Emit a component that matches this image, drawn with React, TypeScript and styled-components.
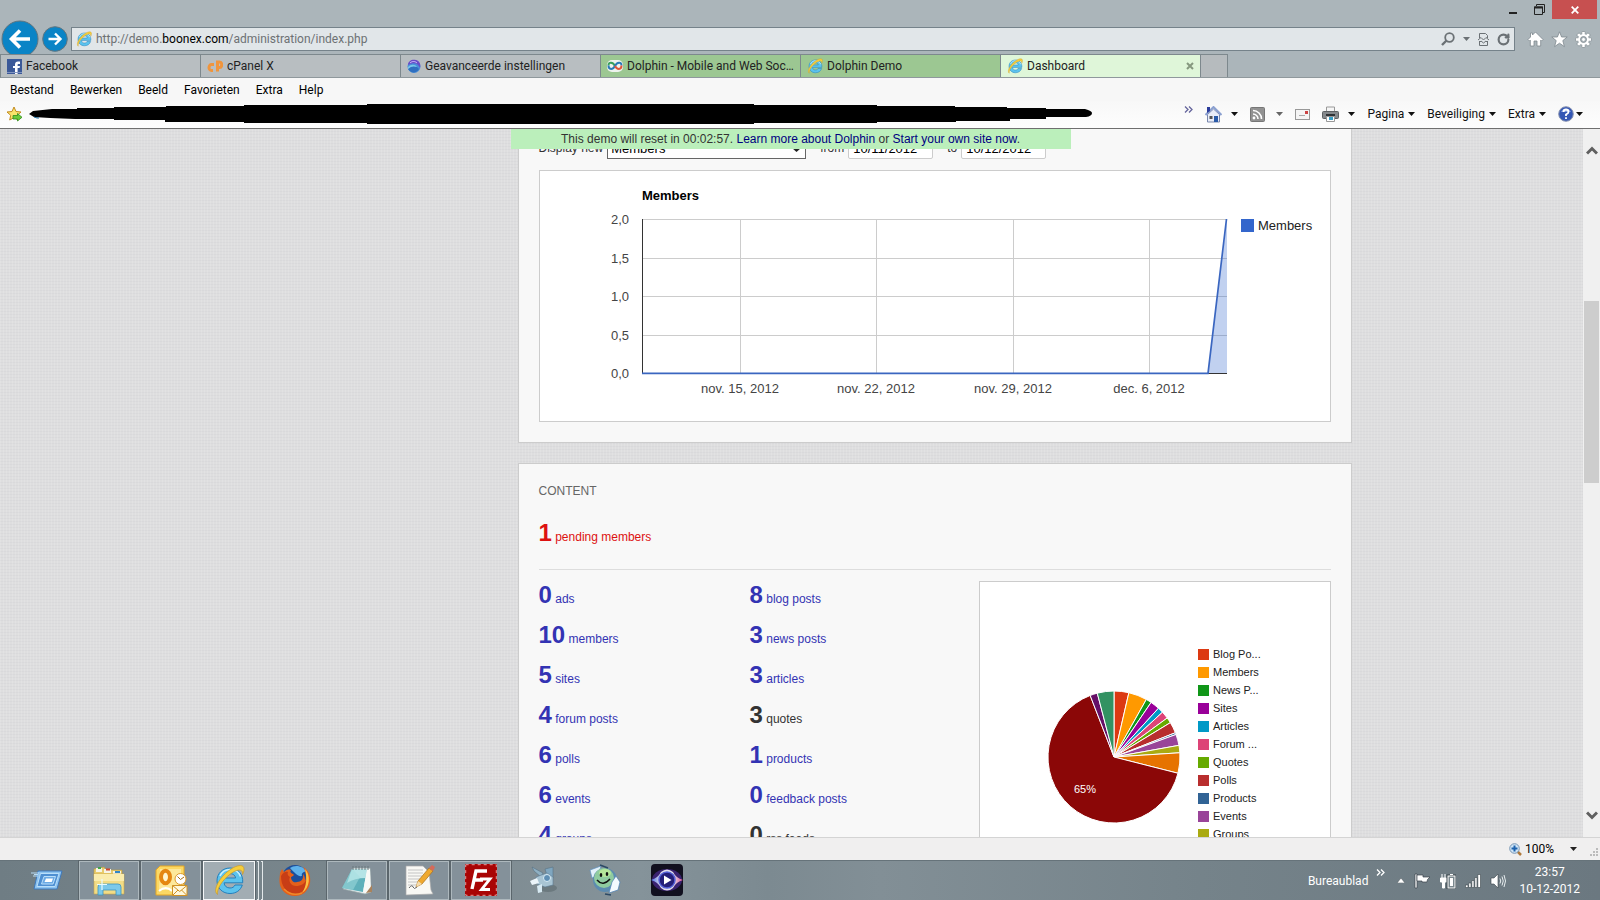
import React from 'react';
import styled, { createGlobalStyle } from 'styled-components';
import { RotateCw } from 'lucide-react';

const ui = 'Roboto, "Noto Sans", sans-serif';
const arial = '"Liberation Sans", Arial, sans-serif';

const GlobalStyle = createGlobalStyle`
  * { box-sizing: border-box; }
  body { margin: 0; background: #dcdcdd; }
  button { font: inherit; color: inherit; background: none; border: 0; padding: 0; white-space: nowrap; }
  svg { display: block; flex: none; }
`;

const Desktop = styled.div`
  display: flex;
  flex-direction: column;
  height: 100vh;
  overflow: hidden;
  font: 12px/16px ${ui};
  color: #000;
`;

/* ---------- browser frame ---------- */

const Frame = styled.header`
  flex: none;
  background: #abb5ba;
`;

const TitleBar = styled.div`
  display: flex;
  justify-content: flex-end;
  height: 26px;
  padding-right: 3px;
`;

const WindowButton = styled.button<{ $close?: boolean }>`
  display: flex;
  align-items: center;
  justify-content: center;
  width: ${p => (p.$close ? 45 : 26)}px;
  height: 19px;
  background: ${p => (p.$close ? '#c75050' : 'transparent')};
`;

const NavRow = styled.div`
  display: flex;
  align-items: center;
  height: 28px;
  padding: 0 8px 2px 1px;
`;

const BackButton = styled.button`
  flex: none;
  width: 38px;
  height: 38px;
`;

const ForwardButton = styled.button`
  flex: none;
  width: 26px;
  margin: 0 3px;
`;

const AddressBar = styled.div`
  display: flex;
  flex: 1;
  align-items: center;
  gap: 4px;
  height: 24px;
  padding: 0 4px;
  border: 1px solid #75828a;
  background: #e1e6e9;
`;

const Url = styled.div`
  flex: 1;
  color: #6d7174;
  b { font-weight: 400; color: #000; }
`;

const IconButton = styled.button`
  display: flex;
  align-items: center;
  justify-content: center;
`;

const AddressTools = styled.div`
  display: flex;
  align-items: center;
  gap: 8px;
  color: #6b7175;
`;

const BrowserTools = styled.div`
  display: flex;
  gap: 7px;
  padding-left: 12px;
`;

const TabStrip = styled.nav`
  display: flex;
  height: 24px;
  border-bottom: 1px solid #8f989c;
  border-left: 1px solid #7d888d;
`;

const Tab = styled.div<{ $tone: string }>`
  display: flex;
  align-items: center;
  width: 200px;
  padding: 0 6px;
  border: 1px solid #7d888d;
  border-width: 1px 1px 0 0;
  background: ${p => p.$tone};
  color: #222;
`;

const TabButton = styled.button`
  display: flex;
  flex: 1;
  align-items: center;
  gap: 4px;
  min-width: 0;
  text-align: left;
  span { overflow: hidden; text-overflow: ellipsis; white-space: nowrap; }
`;

const NewTab = styled.button`
  width: 27px;
  border: 1px solid #7d888d;
  border-width: 1px 1px 0 0;
  background: #b6bbbe;
`;

const MenuBar = styled.nav`
  display: flex;
  gap: 16px;
  height: 23px;
  padding: 0 10px;
  align-items: center;
  background: #f7f7f7;
`;

const CommandBar = styled.div`
  display: flex;
  align-items: center;
  height: 28px;
  padding: 0 17px 1px 6px;
  border-bottom: 1px solid #6f6f6f;
  background: linear-gradient(#f8f8f8, #fdfdfd);
`;

const ScribbleHolder = styled.div`
  flex: none;
  margin-left: 5px;
`;

const Commands = styled.div`
  display: flex;
  flex: 1;
  align-items: center;
  justify-content: flex-end;
  gap: 12px;
`;

const Command = styled.button<{ $gap?: number; $muted?: boolean }>`
  display: flex;
  align-items: center;
  gap: ${p => p.$gap ?? 3}px;
  color: ${p => (p.$muted ? '#666' : '#111')};
`;

const Overflow = styled.button`
  display: flex;
  align-self: flex-start;
  color: #65659c;
`;

/* ---------- web page ---------- */

const Viewport = styled.div`
  display: flex;
  flex: 1;
  min-height: 0;
`;

const Page = styled.main`
  position: relative;
  flex: 1;
  min-width: 0;
  overflow: hidden;
  font: 12px/16px ${arial};
  color: #333;
  background:
    repeating-linear-gradient(90deg, rgba(255,255,255,.12) 0 1px, transparent 1px 3px),
    repeating-linear-gradient(#dededf 0 2px, #d9d9db 2px 3px);
`;

const DemoBanner = styled.div`
  position: absolute;
  z-index: 1;
  top: 0;
  left: 50%;
  width: 560px;
  height: 20px;
  margin-left: -281px;
  line-height: 20px;
  background: #bbefbb;
  text-align: center;
  a { color: #000080; text-decoration: none; }
`;

const Container = styled.div`
  max-width: 1120px;
  margin: 0 auto;
  padding-left: 286px;
`;

const Panel = styled.section<{ $first?: boolean }>`
  margin-bottom: 20px;
  padding: ${p => (p.$first ? '8px' : '18px')} 20px 20px;
  border: 1px solid #ccc;
  border-top-width: ${p => (p.$first ? 0 : 1)}px;
  background: #f8f8f8;
`;

const FilterRow = styled.form`
  display: flex;
  align-items: center;
  margin-bottom: 11px;
`;

const Field = styled.label`
  display: flex;
  align-items: center;
  gap: 4px;
  margin-right: 14px;
`;

const SelectWrap = styled.span`
  position: relative;
  svg { position: absolute; right: 5px; top: 9px; pointer-events: none; }
`;

const Select = styled.select`
  appearance: none;
  display: block;
  width: 199px;
  height: 22px;
  padding: 1px 3px 0;
  border: 1px solid #666;
  border-radius: 0;
  background: #fff;
  font: 13px ${arial};
  color: #000;
`;

const DateInput = styled.input`
  width: 85px;
  height: 22px;
  padding: 1px 4px 0;
  border: 1px solid #ccc;
  border-radius: 2px;
  background: #fff;
  font: 13px ${arial};
  color: #000;
`;

const ChartBox = styled.div`
  border: 1px solid #ccc;
  background: #fff;
`;

const Heading = styled.h2`
  margin: 0 0 19px;
  font: 12px/18px ${arial};
  color: #666;
`;

const Pending = styled.div`
  height: 51px;
  border-bottom: 1px solid #ddd;
  margin-bottom: 11px;
`;

const ContentGrid = styled.div`
  display: grid;
  grid-template-columns: 211px 1fr 352px;
`;

const StatList = styled.ul`
  margin: 0;
  padding: 0;
  list-style: none;
`;

const Stat = styled.a<{ $tone?: string }>`
  display: block;
  height: 40px;
  line-height: 28px;
  color: ${p => p.$tone ?? '#3333b3'};
  text-decoration: none;
  b { font-size: 24px; }
`;

const ScrollTrack = styled.div`
  display: flex;
  flex: none;
  flex-direction: column;
  align-items: center;
  width: 17px;
  padding: 17px 0;
  background: #f0f0f0;
`;

const ScrollSpace = styled.div<{ $grow: number }>`
  flex: ${p => p.$grow} 1 0;
`;

const ScrollThumb = styled.div`
  flex: 182 1 0;
  width: 15px;
  background: #cdcdcd;
`;

const StatusBar = styled.footer`
  display: flex;
  flex: none;
  align-items: center;
  justify-content: flex-end;
  height: 23px;
  border-top: 1px solid #d4d4d4;
  background: #f0efef;
`;

const ZoomButton = styled.button`
  display: flex;
  align-items: center;
  gap: 3px;
  margin-right: 12px;
  svg:last-child { margin-left: 13px; }
`;

/* ---------- taskbar ---------- */

const Taskbar = styled.footer`
  display: flex;
  flex: none;
  align-items: center;
  height: 40px;
  padding: 0 20px 0 17px;
  border-top: 1px solid #66737a;
  background: linear-gradient(90deg, #6f7d84, #7b888e 25%, #85939a 40%, #7c8a91 48%, #828f96 55%, #75838a 75%, #6b7880);
  color: #fff;
`;

const TaskButton = styled.button<{ $open?: boolean; $active?: boolean }>`
  display: flex;
  align-items: center;
  justify-content: center;
  width: ${p => (p.$active ? 52 : 60)}px;
  height: 39px;
  margin-right: 2px;
  padding-bottom: 1px;
  border: 1px solid ${p => (p.$active ? '#f4f7f8' : p.$open ? '#adb8bd' : 'transparent')};
  outline: ${p => (p.$open || p.$active ? '1px solid #5b666c' : 'none')};
  background: ${p => (p.$active ? '#a2adb3' : p.$open ? '#84919a' : 'transparent')};
`;

const Stacked = styled.span`
  display: flex;
  gap: 2px;
  width: 8px;
  height: 39px;
  i { width: 2px; border: 1px solid #e2e8ea; border-left: 0; }
`;

const Tray = styled.div`
  display: flex;
  flex: 1;
  align-items: center;
  justify-content: flex-end;
`;

const DesktopLabel = styled.button`
  display: flex;
  margin-right: 12px;
  svg { margin: -4px 0 0 8px; }
`;

const TrayIcons = styled.div`
  display: flex;
  align-items: center;
  gap: 9px;
  margin-right: 13px;
`;

const Clock = styled.time`
  text-align: center;
  line-height: 17px;
`;

/* ---------- drawings ---------- */

const Caret = ({ color = 'currentColor' }: { color?: string }) => (
  <svg width="7" height="4"><path d="M0 0H7L3.5 4Z" fill={color} /></svg>
);

const Chevrons = ({ size = 9 }: { size?: number }) => (
  <svg width={size} height="7" viewBox="0 0 9 7" fill="none" stroke="currentColor" strokeWidth="1.3">
    <path d="M1 .5L4 3.5L1 6.5M5 .5L8 3.5L5 6.5" />
  </svg>
);

const IeIcon = ({ size = 16 }: { size?: number }) => (
  <svg width={size} height={size} viewBox="0 0 32 32">
    <path d="M17 4C9.500 4 4 9.500 4 16.800C4 24.500 9.800 29.500 17 29.500C23 29.500 27.500 26.500 29.300 21H22C21 23 19.500 24 17 24C13.600 24 11.300 22 11.100 18.800H29.700C30.300 10 25 4 17 4ZM11.300 14C11.800 11.200 14 9.600 17 9.600C20 9.600 22.200 11.200 22.600 14Z" fill="#5cc3ee" stroke="#2480bd" strokeWidth="1" />
    <path d="M7 12C9 7.500 12.500 5.500 17 5.500C22 5.500 26 8.200 27.500 12.500" stroke="#c8f0ff" strokeWidth="1.500" fill="none" />
    <path d="M4.500 30.500C-1 26 7 13 16 6.500C23 1 31 -.500 31 5C31 7 30.400 9 29.500 10.500C30.300 5.500 26 4 18 9.500C9 16 3.500 25.500 4.500 30.500Z" fill="#f5ce3d" stroke="#c9992a" strokeWidth=".7" />
  </svg>
);

const FacebookIcon = () => (
  <svg width="15" height="15"><rect width="15" height="15" fill="#3b5998" /><path d="M8 15V9H6V7H8V5.500C8 3.500 9.200 2.500 11 2.500H13V5H11.600C10.900 5 10.600 5.300 10.600 6V7H13L12.600 9H10.600V15Z" fill="#fff" /><path d="M0 13.500H15" stroke="#8195c1" /></svg>
);

const CpanelIcon = () => (
  <svg width="16" height="14" fill="none" stroke="#f0953c" strokeWidth="3"><path d="M7 5.500H4.500A2.500 3 0 0 0 4.500 11.500H6M10.500 12.500V3H12.500A2 2.500 0 0 1 12.500 8.500H10.500" /></svg>
);

const GlobeIcon = () => (
  <svg width="14" height="15" viewBox="0 0 14 15"><circle cx="7" cy="7.500" r="6.500" fill="#4a8fd8" /><path d="M1 6C1 2 5 0 9 1C13 2 14 6 13 9C11 4 7 3 1 6Z" fill="#6a4bc8" /><path d="M1 10C5 6 9 6 12 10C10 14 4 15 1 10Z" fill="#2f6fc0" /><path d="M1 8C4 5 8 5 10 8C7 7 4 7 1 10Z" fill="#79c8ea" /><path d="M3 4C5 2 8 2 10 4" stroke="#cfc4ff" fill="none" /></svg>
);

const LoopIcon = () => (
  <svg width="16" height="12"><rect width="16" height="12" rx="5" fill="#eef3ee" /><g fill="none" strokeWidth="2"><path d="M8 6C6 2 1.500 1.500 1.500 5.500" stroke="#39a05b" /><path d="M1.500 5.500C1.500 10 6 10 8 6C10 2 14.500 1.500 14.500 5.500" stroke="#2a7ab8" /><path d="M14.500 5.500C14.500 10 10 10 8 6" stroke="#e0563a" /></g></svg>
);

const FavStar = () => (
  <svg width="17" height="16" viewBox="0 0 17 16"><path d="M8 1L10 5.500L15 6L11.300 9.300L12.300 14L8 11.700L3.700 14L4.700 9.300L1 6L6 5.500Z" fill="#fbe36b" stroke="#c28a1f" /><path d="M7 9.500H11.500V7.500L16 11.300L11.500 15V13H7Z" fill="#6ccb3b" stroke="#2f8b1c" strokeWidth=".8" /></svg>
);

const Scribble = () => (
  <svg width="1064" height="20" viewBox="28 103 1064 20">
    <path d="M29 113L33 110L52 108H77V107H114V106H166V105H244V104H367V103H754V104H877V105H955V106H1007V107H1046V108H1085Q1092 110 1092 112Q1092 115 1086 116H1046V118H1010V120H956V121H877V122H754V123H367V122H244V121H165V119H114V118H75L50 117L34 116Z" />
    <path d="M34 116L37 117H39" stroke="#27a" />
  </svg>
);

const HouseIcon = () => (
  <svg width="17" height="17" viewBox="0 0 17 17"><path d="M2.500 8.500L8.500 3L14.500 8.500V16H2.500Z" fill="#e9edf8" stroke="#7887ad" /><path d="M.5 9L8.500 1L16.500 9" fill="none" stroke="#8ba0d0" strokeWidth="2" /><path d="M2 1H5V5L2 7Z" fill="#2b3c9b" /><rect x="9" y="10" width="4" height="6" fill="#2a5ba8" /><rect x="4.500" y="10" width="3" height="3" fill="#555" /></svg>
);

const RssIcon = () => (
  <svg width="15" height="15"><rect x=".5" y=".5" width="14" height="14" rx="1" fill="#929292" stroke="#777" /><circle cx="4" cy="11" r="1.400" fill="#fff" /><path d="M3 7A5 5 0 0 1 8 12M3 3.500A8.500 8.500 0 0 1 11.500 12" fill="none" stroke="#fff" strokeWidth="1.600" /></svg>
);

const MailIcon = () => (
  <svg width="15" height="11"><rect x=".5" y=".5" width="14" height="10" fill="#f5f5f5" stroke="#999" /><rect x="10" y="2" width="3" height="3" fill="#c44" /><path d="M4 6.500H10" stroke="#aaa" /></svg>
);

const PrinterIcon = () => (
  <svg width="17" height="16"><path d="M4.500 1H12.500V6H4.500Z" fill="#f6f6f6" stroke="#999" /><rect x=".5" y="5.500" width="16" height="7" rx="1" fill="#85898c" stroke="#5d6063" /><rect x="4" y="8" width="9" height="2" fill="#303336" /><path d="M4.500 10.500H12.500V15.500H4.500Z" fill="#fff" stroke="#999" /><path d="M7 11H11V14H7Z" fill="#38a0c8" /></svg>
);

const HelpIcon = () => (
  <svg width="16" height="16"><circle cx="8" cy="8" r="7.300" fill="#3457b4" stroke="#8a94b0" /><path d="M3 6A5.500 5.500 0 0 1 13 6Z" fill="#7d99da" /><path d="M5.500 6Q5.500 3.500 8 3.500T10.500 6Q10.500 7.200 8 8.500V10M8 11.200V13" fill="none" stroke="#fff" strokeWidth="1.800" /></svg>
);

const HomeIcon = () => (
  <svg width="17" height="16"><path d="M8.500 1L16 8.500L14.500 10L13.700 9.200V15H10V10H7V15H3.300V9.200L2.500 10L1 8.500L3.500 6V2H5.500V4Z" fill="#fff" stroke="#7e888e" strokeWidth=".8" /></svg>
);

const StarIcon = () => (
  <svg width="17" height="17"><path d="M8.500 .8L10.600 6H16.200L11.800 9.600L13.400 15.600L8.500 12.200L3.600 15.600L5.200 9.600L.8 6H6.400Z" fill="#fff" stroke="#7e888e" strokeWidth=".8" /></svg>
);

const GearIcon = () => (
  <svg width="17" height="17"><g transform="translate(8.500 8.500)">{[0, 45, 90, 135].map(a => <rect key={a} x="-1.700" y="-8" width="3.400" height="16" rx=".8" fill="#fff" stroke="#7e888e" strokeWidth=".7" transform={`rotate(${a})`} />)}<circle r="5.400" fill="#fff" /><circle r="3" fill="#abb5ba" stroke="#7e888e" strokeWidth=".8" /><circle r="1.400" fill="#fff" /></g></svg>
);

const axisY = [
  ['2,0', 49], ['1,5', 88], ['1,0', 126], ['0,5', 165], ['0,0', 203],
] as const;
const axisX = [
  ['nov. 15, 2012', 201], ['nov. 22, 2012', 337], ['nov. 29, 2012', 474], ['dec. 6, 2012', 610],
] as const;

const MembersChart = () => (
  <svg width="100%" height="250" fontFamily={arial} fontSize="13" fill="#444" role="img" aria-label="Members">
    <text x="102" y="29" fontWeight="700" fill="#000">Members</text>
    {axisY.map(([label, y]) => (
      <g key={label}>
        <text x="89" y={y + 4} textAnchor="end">{label}</text>
        <path d={`M102 ${y - .5}H687`} stroke="#ccc" />
      </g>
    ))}
    {axisX.map(([label, x]) => (
      <g key={label}>
        <text x={x - 1} y="222" textAnchor="middle">{label}</text>
        <path d={`M${x - .5} 48V202`} stroke="#ccc" />
      </g>
    ))}
    <path d="M102.500 48V203M102 202.500H687" stroke="#333" fill="none" />
    <path d="M668 202L687 48V202Z" fill="#3366cc" fillOpacity=".3" />
    <path d="M102 202.300H668L686.500 48" stroke="#3a66c0" strokeWidth="1.700" fill="none" />
    <rect x="701" y="48" width="13" height="13" fill="#3366cc" />
    <text x="718" y="59" fill="#222">Members</text>
  </svg>
);

const slices: [number, string, string][] = [
  [8, '#dc3912', 'Blog Po...'], [10, '#ff9900', 'Members'], [3, '#109618', 'News P...'],
  [5, '#990099', 'Sites'], [3, '#0099c6', 'Articles'], [4, '#dd4477', 'Forum ...'],
  [3, '#66aa00', 'Quotes'], [6, '#b82e2e', 'Polls'], [1, '#316395', 'Products'],
  [6, '#994499', 'Events'], [4, '#aaaa11', 'Groups'], [11, '#e67300', 'Photos'],
  [144, '#8b0707', 'Sounds'], [4, '#651067', 'Videos'], [9, '#329262', 'Files'],
];
const sliceTotal = slices.reduce((sum, s) => sum + s[0], 0);

const PieChart = () => {
  let done = 0;
  const at = (n: number) => {
    const a = (n / sliceTotal) * Math.PI * 2;
    return `${134 + 66 * Math.sin(a)} ${175 - 66 * Math.cos(a)}`;
  };
  return (
    <svg width="100%" height="340" fontFamily={arial} fontSize="11" fill="#222" role="img" aria-label="Content share">
      {slices.map(([n, color, label]) => {
        const from = at(done);
        done += n;
        return <path key={label} d={`M134 175L${from}A66 66 0 ${n > sliceTotal / 2 ? 1 : 0} 1 ${at(done)}Z`} fill={color} stroke="#fff" />;
      })}
      <text x="105" y="211" textAnchor="middle" fill="#fff">65%</text>
      {slices.slice(0, 11).map(([, color, label], i) => (
        <g key={label}>
          <rect x="218" y={67 + i * 18} width="11" height="11" fill={color} />
          <text x="233" y={76 + i * 18}>{label}</text>
        </g>
      ))}
    </svg>
  );
};

/* Taskbar program icons, each on a 32px grid. */
const DesktopIcon = () => (
  <svg width="32" height="32"><path d="M7 7H31L26 25H3Z" fill="#8ec4f0" stroke="#3d78bc" /><path d="M9.500 9.500H28L24 22.500H6Z" fill="#4e8fd2" stroke="#b9defa" /><path d="M13 12.500H24.500L22 20H10.500Z" fill="#6ba9e4" stroke="#b9defa" /><path d="M15 14.500H22L20.700 18H13.500Z" fill="#fff" /><path d="M0 9H8M2 12H7M3 10.500H7" stroke="#b9dcf5" /></svg>
);
const ExplorerIcon = () => (
  <svg width="34" height="32"><path d="M2 5L12 3L14 6H30V12H2Z" fill="#e9cb6c" stroke="#b99a3f" strokeWidth=".6" /><path d="M4 4H10V8H4Z" fill="#f6f4e4" /><path d="M6 3H9V5H6Z" fill="#3fa84a" /><path d="M12 5H19V9H12Z" fill="#f6f4e4" /><path d="M14 4.500H18V6.500H14Z" fill="#d0482e" /><path d="M21 7H29V10H21Z" fill="#f6f4e4" /><path d="M23 7H28V9H23Z" fill="#3387c4" /><path d="M2 10H32V30H2Z" fill="#f2dc86" stroke="#c9a84a" strokeWidth=".6" /><path d="M2 10H32V17H2Z" fill="#faecad" /><path d="M6 31V23Q6 20 9 20H26Q29 20 29 23V31H24V26H11V31Z" fill="#7cc9ea" stroke="#3e94bf" strokeWidth=".8" /><path d="M10 15V26M5 20.500H15" stroke="#e8faff" strokeWidth="1.200" /></svg>
);
const OutlookIcon = () => (
  <svg width="34" height="32"><path d="M6 2H30V31H2V6Z" fill="#fbd864" stroke="#e5a623" /><path d="M6 5H27V26H5Z" fill="#fff3c0" opacity=".6" /><path d="M5 27Q12 21 18 27" fill="none" stroke="#fff" strokeWidth="2" /><ellipse cx="11.500" cy="13" rx="4.500" ry="6.300" fill="#fff5cf" stroke="#e58712" strokeWidth="4" /><circle cx="26.500" cy="15" r="5.500" fill="#fff" stroke="#dc9a2c" /><path d="M23.500 12.500L26.500 15.500L30 13" fill="none" stroke="#a46b13" /><path d="M18.500 21.500H33V31.500H18.500Z" fill="#fff8dc" stroke="#d09225" /><path d="M18.500 21.500L25.700 27.500L33 21.500M18.500 31.500L24 26M33 31.500L27.500 26" fill="none" stroke="#d09225" /></svg>
);
const FirefoxIcon = () => (
  <svg width="34" height="33"><circle cx="17" cy="14" r="13" fill="#1b4f9c" /><path d="M12 4C17 0 26 2 29 8C26 7 23 9 24 12C20 13 17 9 12 4Z" fill="#5fb2ea" /><path d="M2 9L4 5L6 8C8 6 10 5 13 6C12 7 12 9 15 10C17 11 15 12 13 13C13 17 16 19 19 18C23 18 26 15 25 10C27 12 27 14 27 17C29 13 28 7 25 3C31 6 33 13 32 19C30 28 24 32 17 32C8 32 2 26 1.500 18C1.300 14 2 11 2 9Z" fill="#e4601b" /><path d="M3 12C5 8 8 7 10 8C9 10 10 12 12 13C10 17 13 22 18 22C23 22 27 20 29 14C31 22 25 30 17 30C8 29 3 22 3 12Z" fill="#c83d16" /><path d="M27 5C33 11 32 24 24 29C29 22 29 13 27 5Z" fill="#fbc043" /><path d="M6 25Q14 33 24 29" fill="none" stroke="#f08a2a" strokeWidth="1.500" /></svg>
);
const NotepadIcon = () => (
  <svg width="32" height="32"><path d="M12 4H29L30 28L24 30L2 25Z" fill="#e7eef0" stroke="#9aa" strokeWidth=".7" /><path d="M11 5H26L22 28L1 24Z" fill="#5fb0ba" /><path d="M11 5H26L24.500 14Q14 14 6 19Z" fill="#b5e4e6" /><path d="M11 5L19 13L12 26L1 24Z" fill="#a5dde0" opacity=".5" /><path d="M26 5H29L30 28L24 29L22 28Z" fill="#f9f9f6" /><path d="M25 29L31 21V28Z" fill="#a9825c" /><path d="M12 2V6M15 2V6M18 2V6M21 2V6M24 2V6M27 2V6" stroke="#68777d" /></svg>
);
const WordpadIcon = () => (
  <svg width="32" height="32"><path d="M3 2H20L26 8L28 26L30 30L3 31Z" fill="#f8f8f4" stroke="#aaa" strokeWidth=".7" /><path d="M5 6H20M5 9H20M5 12H19M5 15H17M5 18H15M5 21H13" stroke="#c4c4c4" strokeWidth="1.200" /><path d="M15 17L26 4L30 7L19 20L13 23Z" fill="#efa92f" stroke="#a8701d" strokeWidth=".7" /><path d="M26 4L29 1L32 3L30 7Z" fill="#d56a5a" /><path d="M15 17L19 20L13 23Z" fill="#f4dcae" /><path d="M6 24Q9 20 10 23T14 23" fill="none" stroke="#666" /></svg>
);
const FilezillaIcon = () => (
  <svg width="32" height="32"><rect width="32" height="32" fill="#a90505" /><rect x=".7" y=".7" width="30.600" height="30.600" fill="none" stroke="#e79a9a" strokeDasharray="3 3" /><path d="M7 25L11 7H22M9 16H18" fill="none" stroke="#fff" strokeWidth="3.400" /><path d="M15 15H25L16.500 25.500H25" fill="none" stroke="#fff" strokeWidth="2.800" /></svg>
);
const CameraIcon = () => (
  <svg width="32" height="32"><ellipse cx="21" cy="24" rx="9" ry="4" fill="#5d6a70" opacity=".6" /><path d="M5 3L16 9L14 13L7 7Z" fill="#8fb0c3" stroke="#587285" strokeWidth=".6" /><path d="M18 5L26 3V14L20 12Z" fill="#7fa6bf" stroke="#587285" strokeWidth=".6" /><path d="M9 13L20 9L26 13V21L18 23L10 20Z" fill="#a9c5d4" stroke="#5a7890" strokeWidth=".6" /><circle cx="20" cy="14" r="3.500" fill="#5f8fb4" stroke="#d8ecf5" /><path d="M3 17L10 14L12 19L5 21Z" fill="#ecf5fa" /><path d="M10 22L15 20L15 28L11 29Z" fill="#d8eaf3" /></svg>
);
const SmileyIcon = () => (
  <svg width="32" height="32"><path d="M1 6L12 2L9 12L3 14Z" fill="#e3f1fa" stroke="#5a8fc0" strokeWidth=".7" /><circle cx="16" cy="16" r="12" fill="#5c8bb0" /><circle cx="15" cy="14" r="10" fill="#8fcba0" /><ellipse cx="16" cy="9" rx="6" ry="4" fill="#b4e59a" /><ellipse cx="12" cy="11" rx="1.300" ry="2" fill="#111" /><ellipse cx="18" cy="10" rx="1.300" ry="2" fill="#111" /><path d="M8 16Q14 23 21 15" fill="none" stroke="#111" strokeWidth="1.500" /><path d="M23 18L27 12L31 18L29 26L20 29Z" fill="#f4fafe" stroke="#4a80b5" strokeWidth=".7" /><path d="M11 1L19 4M16 30L22 31" stroke="#2c4a66" strokeWidth="1.500" /></svg>
);
const PlayerIcon = () => (
  <svg width="32" height="32"><defs><linearGradient id="beam"><stop stopColor="#4a7cff" /><stop offset=".3" stopColor="#fff" /><stop offset=".7" stopColor="#fff" /><stop offset="1" stopColor="#ff5a9a" /></linearGradient></defs><rect width="32" height="32" rx="4" fill="#11101f" /><ellipse cx="16" cy="16" rx="15" ry="11" fill="#3a2270" /><path d="M0 16Q7 14 10 8Q16 3 22 8Q25 14 32 16Q25 18 22 24Q16 29 10 24Q7 18 0 16Z" fill="url(#beam)" opacity=".85" /><circle cx="16" cy="16" r="8" fill="#241e78" stroke="#5560d8" strokeWidth="1.500" /><path d="M13 11.500L20.500 16L13 20.500Z" fill="#fff" /></svg>
);

/* ---------- data ---------- */

const tabs = [
  { title: 'Facebook', icon: <FacebookIcon />, tone: '#b8bec1' },
  { title: 'cPanel X', icon: <CpanelIcon />, tone: '#b8bec1' },
  { title: 'Geavanceerde instellingen', icon: <GlobeIcon />, tone: '#b8bec1' },
  { title: 'Dolphin - Mobile and Web Soc...', icon: <LoopIcon />, tone: '#9cc792' },
  { title: 'Dolphin Demo', icon: <IeIcon />, tone: '#9cc792' },
  { title: 'Dashboard', icon: <IeIcon />, tone: '#dff6d9', active: true },
];

type StatItem = { count: number; label: string; plain?: boolean };
const statColumns: StatItem[][] = [
  [
    { count: 0, label: 'ads' }, { count: 10, label: 'members' }, { count: 5, label: 'sites' },
    { count: 4, label: 'forum posts' }, { count: 6, label: 'polls' }, { count: 6, label: 'events' },
    { count: 4, label: 'groups' },
  ],
  [
    { count: 8, label: 'blog posts' }, { count: 3, label: 'news posts' }, { count: 3, label: 'articles' },
    { count: 3, label: 'quotes', plain: true }, { count: 1, label: 'products' },
    { count: 0, label: 'feedback posts' }, { count: 0, label: 'rss feeds', plain: true },
  ],
];

const Browser = () => (
  <Frame>
    <TitleBar>
      <WindowButton aria-label="Minimaliseren"><svg width="8" height="10"><path d="M0 7H8V9H0Z" fill="#222" /></svg></WindowButton>
      <WindowButton aria-label="Herstellen"><svg width="11" height="11" fill="none" stroke="#222"><path d="M2.500 2V.5H10.500V8.500H9" /><path d="M.5 3H8.500V10.500H.5Z" /><path d="M0 3.500H9" strokeWidth="2" /></svg></WindowButton>
      <WindowButton $close aria-label="Sluiten"><svg width="8" height="8"><path d="M.7 .7L7.300 7.300M7.300 .7L.7 7.300" stroke="#fff" strokeWidth="1.800" /></svg></WindowButton>
    </TitleBar>
    <NavRow>
      <BackButton aria-label="Vorige">
        <svg width="38" height="38"><circle cx="19" cy="19" r="18" fill="#0a84c6" stroke="#60757f" /><path d="M29 19H11M19 10.500L10.500 19L19 27.500" fill="none" stroke="#fff" strokeWidth="3.600" /></svg>
      </BackButton>
      <ForwardButton aria-label="Volgende">
        <svg width="26" height="26"><circle cx="13" cy="13" r="12.300" fill="#0a84c6" stroke="#60757f" /><path d="M6.500 13H18M13 7.500L18.500 13L13 18.500" fill="none" stroke="#fff" strokeWidth="2.400" /></svg>
      </ForwardButton>
      <AddressBar>
        <IeIcon />
        <Url>http://demo.<b>boonex.com</b>/administration/index.php</Url>
        <AddressTools>
          <IconButton aria-label="Zoeken"><svg width="14" height="14" fill="none" stroke="currentColor"><circle cx="8.500" cy="5.500" r="4.300" strokeWidth="1.800" /><path d="M5.500 8.500L1 13" strokeWidth="2.400" /></svg></IconButton>
          <Caret />
          <IconButton aria-label="Compatibiliteit"><svg width="11" height="13" fill="none" stroke="currentColor"><path d="M1.500 5V.5H7.500L9.500 2.500V5M1.500 8V12.500H9.500V8" /><path d="M0 7L3 4.500L5.500 7L8 4.500L11 7M1 10L3 8L5.500 10L8 8L10 10" /></svg></IconButton>
          <IconButton aria-label="Vernieuwen"><RotateCw size={13} strokeWidth={4} /></IconButton>
        </AddressTools>
      </AddressBar>
      <BrowserTools>
        <IconButton aria-label="Startpagina"><HomeIcon /></IconButton>
        <IconButton aria-label="Favorieten"><StarIcon /></IconButton>
        <IconButton aria-label="Instellingen"><GearIcon /></IconButton>
      </BrowserTools>
    </NavRow>
    <TabStrip>
      {tabs.map(t => (
        <Tab key={t.title} $tone={t.tone}>
          <TabButton>{t.icon}<span>{t.title}</span></TabButton>
          {t.active && (
            <IconButton aria-label="Tabblad sluiten"><svg width="8" height="8"><path d="M1 1L7 7M7 1L1 7" stroke="#85987f" strokeWidth="2" /></svg></IconButton>
          )}
        </Tab>
      ))}
      <NewTab aria-label="Nieuw tabblad" />
    </TabStrip>
    <MenuBar>
      {['Bestand', 'Bewerken', 'Beeld', 'Favorieten', 'Extra', 'Help'].map(m => <button key={m}>{m}</button>)}
    </MenuBar>
    <CommandBar>
      <IconButton aria-label="Favoriet toevoegen"><FavStar /></IconButton>
      <ScribbleHolder><Scribble /></ScribbleHolder>
      <Commands>
        <Overflow aria-label="Meer"><Chevrons /></Overflow>
        <Command $gap={9} aria-label="Startpagina"><HouseIcon /><Caret /></Command>
        <Command $gap={11} $muted aria-label="Feeds"><RssIcon /><Caret /></Command>
        <Command aria-label="E-mail"><MailIcon /></Command>
        <Command $gap={9} aria-label="Afdrukken"><PrinterIcon /><Caret /></Command>
        <Command $gap={4}>Pagina<Caret /></Command>
        <Command $gap={4}>Beveiliging<Caret /></Command>
        <Command $gap={4}>Extra<Caret /></Command>
        <Command $gap={2} aria-label="Help"><HelpIcon /><Caret /></Command>
      </Commands>
    </CommandBar>
  </Frame>
);

const Dashboard = () => (
  <Page>
    <DemoBanner>
      This demo will reset in 00:02:57. <a href="#learn">Learn more about Dolphin</a> or <a href="#start">Start your own site now</a>.
    </DemoBanner>
    <Container>
      <Panel $first>
        <FilterRow>
          <Field>
            Display new
            <SelectWrap>
              <Select defaultValue="Members"><option>Members</option></Select>
              <svg width="9" height="6"><path d="M0 0H9V2L4.500 6L0 2Z" fill="#222" /></svg>
            </SelectWrap>
          </Field>
          <Field>from<DateInput defaultValue="10/11/2012" /></Field>
          <Field>to<DateInput defaultValue="10/12/2012" /></Field>
        </FilterRow>
        <ChartBox><MembersChart /></ChartBox>
      </Panel>
      <Panel>
        <Heading>CONTENT</Heading>
        <Pending><Stat href="#pending" $tone="#dd1111"><b>1</b> pending members</Stat></Pending>
        <ContentGrid>
          {statColumns.map((column, i) => (
            <StatList key={i}>
              {column.map(s => (
                <li key={s.label}>
                  <Stat as={s.plain ? 'span' : 'a'} href={s.plain ? undefined : '#' + s.label} $tone={s.plain ? '#333' : undefined}>
                    <b>{s.count}</b> {s.label}
                  </Stat>
                </li>
              ))}
            </StatList>
          ))}
          <ChartBox><PieChart /></ChartBox>
        </ContentGrid>
      </Panel>
    </Container>
  </Page>
);

const ScrollBar = () => (
  <ScrollTrack>
    <svg width="12" height="9" fill="none" stroke="#606060" strokeWidth="3"><path d="M1 7.500L6 2.500L11 7.500" /></svg>
    <ScrollSpace $grow={146} />
    <ScrollThumb />
    <ScrollSpace $grow={328} />
    <svg width="12" height="9" fill="none" stroke="#606060" strokeWidth="3"><path d="M1 1.500L6 6.500L11 1.500" /></svg>
  </ScrollTrack>
);

const App = () => (
  <Desktop>
    <GlobalStyle />
    <Browser />
    <Viewport>
      <Dashboard />
      <ScrollBar />
    </Viewport>
    <StatusBar>
      <ZoomButton>
        <svg width="13" height="13"><path d="M8 8L12 12" stroke="#b07a3c" strokeWidth="2.500" /><circle cx="5.500" cy="5.500" r="4.800" fill="#cfe4f6" stroke="#7896b4" /><path d="M5.500 2.500V8.500M2.500 5.500H8.500" stroke="#1d62ad" strokeWidth="2" /></svg>
        100%
        <Caret color="#222" />
      </ZoomButton>
      <svg width="11" height="18" fill="#bbb"><path d="M7 8h2v2h-2zM4 11h2v2h-2zM7 11h2v2h-2zM1 14h2v2h-2zM4 14h2v2h-2zM7 14h2v2h-2z" /></svg>
    </StatusBar>
    <Taskbar>
      <TaskButton aria-label="Bureaublad weergeven"><DesktopIcon /></TaskButton>
      <TaskButton $open aria-label="Verkenner"><ExplorerIcon /></TaskButton>
      <TaskButton $open aria-label="Outlook"><OutlookIcon /></TaskButton>
      <TaskButton $active aria-label="Internet Explorer"><IeIcon size={32} /></TaskButton>
      <Stacked><i /><i /></Stacked>
      <TaskButton aria-label="Firefox"><FirefoxIcon /></TaskButton>
      <TaskButton $open aria-label="Kladblok"><NotepadIcon /></TaskButton>
      <TaskButton $open aria-label="WordPad"><WordpadIcon /></TaskButton>
      <TaskButton $open aria-label="FileZilla"><FilezillaIcon /></TaskButton>
      <TaskButton aria-label="Webcam"><CameraIcon /></TaskButton>
      <TaskButton aria-label="Messenger"><SmileyIcon /></TaskButton>
      <TaskButton aria-label="Speler"><PlayerIcon /></TaskButton>
      <Tray>
        <DesktopLabel>Bureaublad<Chevrons /></DesktopLabel>
        <TrayIcons>
          <svg width="8" height="5"><path d="M0 5L4 0L8 5Z" fill="#fff" stroke="#4a555b" strokeWidth=".5" /></svg>
          <svg width="17" height="16" fill="#fff" stroke="#39444a" strokeWidth=".7"><path d="M1 1H3V15H1Z" /><path d="M3 2H9V4H16L13.500 6.500L13 9H8V8H3Z" /></svg>
          <svg width="16" height="16"><path d="M2 1V5M5 1V5M.5 5H6.500V9H4.500V15H2.500V9H.5Z" fill="#fff" stroke="#fff" /><rect x="8" y="3" width="7" height="12" fill="none" stroke="#39444a" strokeWidth="3" /><rect x="8" y="3" width="7" height="12" fill="#7a878d" stroke="#fff" /><rect x="10" y="5" width="3" height="8" fill="#fff" /><path d="M10 1.500H13" stroke="#fff" /></svg>
          <svg width="16" height="14" fill="#fff" stroke="#39444a" strokeWidth=".6"><path d="M.5 11H3V13.500H.5ZM3.700 9H6V13.500H3.700ZM6.800 6.500H9V13.500H6.800ZM9.800 3.500H12V13.500H9.800ZM12.800 .5H15.500V13.500H12.800Z" /></svg>
          <svg width="16" height="16"><path d="M1 5H4L8 1V15L4 11H1Z" fill="#fff" stroke="#39444a" strokeWidth=".6" /><path d="M10 5.500Q11.500 8 10 10.500M12 3.500Q14.500 8 12 12.500M14 2Q17 8 14 14" fill="none" stroke="#e8eef0" /></svg>
        </TrayIcons>
        <Clock>23:57<br />10-12-2012</Clock>
      </Tray>
    </Taskbar>
  </Desktop>
);

export default App;
